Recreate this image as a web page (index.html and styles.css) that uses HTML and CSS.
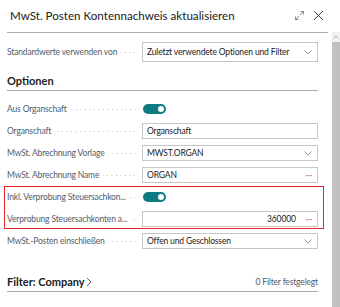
FILE: index.html
```html
<!DOCTYPE html>
<html lang="de">
<head>
<meta charset="utf-8">
<title>MwSt. Posten Kontennachweis aktualisieren</title>
<link rel="stylesheet" href="styles.css">
</head>
<body>
<div class="dialog">
  <header class="titlebar">
    <h1 class="title">MwSt. Posten Kontennachweis aktualisieren</h1>
    <div class="actions">
      <svg class="icon-expand" width="11" height="11" viewBox="0 0 11 11" aria-hidden="true">
        <path d="M6.5 1.5H9.5V4.5M9.5 1.5L6 5M4.5 9.5H1.5V6.5M1.5 9.5L5 6" fill="none" stroke="#7a7a7a" stroke-width="0.9"/>
      </svg>
      <svg class="icon-close" width="11" height="11" viewBox="0 0 11 11" aria-hidden="true">
        <path d="M1 1L10 10M10 1L1 10" fill="none" stroke="#444" stroke-width="1"/>
      </svg>
    </div>
  </header>
  <div class="body">
    <main class="content">
      <div class="form">
        <div class="row row-top">
          <div class="label"><span class="label-text">Standardwerte verwenden von</span><span class="leader"></span></div>
          <div class="field field-top"><span class="value">Zuletzt verwendete Optionen und Filter</span><svg class="chev" width="8" height="5" viewBox="0 0 8 5"><path d="M0.5 0.5L4 4L7.5 0.5" fill="none" stroke="#777" stroke-width="0.8"/></svg></div>
        </div>

        <h2 class="section-title">Optionen</h2>

        <div class="row">
          <div class="label"><span class="label-text">Aus Organschaft</span><span class="leader"></span></div>
          <div class="toggle-cell"><span class="toggle"></span></div>
        </div>
        <div class="row">
          <div class="label"><span class="label-text">Organschaft</span><span class="leader"></span></div>
          <div class="field"><span class="value">Organschaft</span></div>
        </div>
        <div class="row">
          <div class="label"><span class="label-text">MwSt. Abrechnung Vorlage</span><span class="leader"></span></div>
          <div class="field"><span class="value">MWST.ORGAN</span><svg class="chev" width="8" height="5" viewBox="0 0 8 5"><path d="M0.5 0.5L4 4L7.5 0.5" fill="none" stroke="#777" stroke-width="0.8"/></svg></div>
        </div>
        <div class="row">
          <div class="label"><span class="label-text">MwSt. Abrechnung Name</span><span class="leader"></span></div>
          <div class="field"><span class="value">ORGAN</span><span class="ellipsis">···</span></div>
        </div>
        <div class="highlight">
          <div class="row">
            <div class="label"><span class="label-text">Inkl. Verprobung Steuersachkon...</span><span class="leader"></span></div>
            <div class="toggle-cell"><span class="toggle"></span></div>
          </div>
          <div class="row">
            <div class="label"><span class="label-text">Verprobung Steuersachkonten a...</span><span class="leader"></span></div>
            <div class="field"><span class="value num">360000</span><span class="ellipsis">···</span></div>
          </div>
        </div>
        <div class="row">
          <div class="label"><span class="label-text">MwSt.-Posten einschließen</span><span class="leader"></span></div>
          <div class="field"><span class="value">Offen und Geschlossen</span><svg class="chev" width="8" height="5" viewBox="0 0 8 5"><path d="M0.5 0.5L4 4L7.5 0.5" fill="none" stroke="#777" stroke-width="0.8"/></svg></div>
        </div>

        <h2 class="section-title filter-title">
          <span class="filter-name">Filter: Company<svg class="chev-right" width="6" height="10" viewBox="0 0 6 10"><path d="M1 1L5 5L1 9" fill="none" stroke="#555" stroke-width="0.9"/></svg></span>
          <span class="filter-count">0 Filter festgelegt</span>
        </h2>
      </div>
    </main>
    <div class="scrollbar">
      <div class="sb-arrow"><svg width="6" height="4" viewBox="0 0 6 4"><path d="M0.5 3.5L3 1L5.5 3.5" fill="none" stroke="#9a9a9a" stroke-width="0.8"/></svg></div>
      <div class="sb-thumb"></div>
    </div>
  </div>
</div>
</body>
</html>
```

FILE: styles.css
```css
html, body {
  margin: 0;
  padding: 0;
  background: #ffffff;
}

body {
  font-family: Lato, "Open Sans", sans-serif;
  color: #212121;
  width: 340px;
  height: 307px;
  overflow: hidden;
}

.dialog {
  width: 340px;
  height: 307px;
  display: flex;
  flex-direction: column;
}

.titlebar {
  height: 32px;
  flex: 0 0 32px;
  display: flex;
  align-items: center;
  justify-content: space-between;
  padding: 0 16px 2px 10px;
  box-sizing: border-box;
}

.title {
  margin: 0;
  font-size: 11.6px;
  font-weight: 400;
  color: #212121;
  white-space: nowrap;
}

.actions {
  display: flex;
  align-items: center;
  gap: 8px;
}

.actions svg {
  display: block;
}

.body {
  flex: 1;
  display: flex;
  min-height: 0;
}

.content {
  flex: 1;
  margin: 0 4px 0 7px;
  border-top: 1px solid #a3abb7;
  min-width: 0;
}

.form {
  padding: 9px 10px 0 0;
}

.row {
  display: flex;
  align-items: center;
  height: 22px;
}

.row-top {
  height: 20px;
}

.label {
  width: 135px;
  flex: 0 0 135px;
  display: flex;
  align-items: center;
  font-size: 8.5px;
  letter-spacing: -0.15px;
  color: #505c6d;
  min-width: 0;
}

.label-text {
  white-space: nowrap;
  flex: 0 0 auto;
}

.leader {
  flex: 1 1 auto;
  min-width: 6px;
  height: 3px;
  margin: 0 5px 0 4px;
  background-image: radial-gradient(circle, #b9b9b9 0.55px, transparent 0.9px);
  background-size: 4.5px 3px;
  background-repeat: repeat-x;
  background-position: right center;
}

.field {
  flex: 1;
  height: 16px;
  box-sizing: border-box;
  border: 1px solid #c6c6c6;
  display: flex;
  align-items: center;
  padding: 0 4px 0 4px;
  font-size: 8.5px;
  letter-spacing: -0.15px;
  color: #212121;
  min-width: 0;
}

.field-top {
  height: 20px;
}

.value {
  flex: 1;
  white-space: nowrap;
  overflow: hidden;
}

.value.num {
  text-align: right;
  padding-right: 10px;
}

.chev {
  display: block;
  margin-right: 1px;
}

.ellipsis {
  font-size: 8px;
  letter-spacing: 0;
  color: #666;
  margin-right: 1px;
}

.toggle-cell {
  flex: 1;
  display: flex;
  align-items: center;
  padding-left: 1px;
}

.toggle {
  position: relative;
  width: 23px;
  height: 10px;
  border-radius: 5px;
  background: #0f7b83;
}

.toggle::after {
  content: "";
  position: absolute;
  right: 2px;
  top: 2px;
  width: 6px;
  height: 6px;
  border-radius: 50%;
  background: #ffffff;
}

.section-title {
  margin: 11px 0 7px 0;
  height: 16px;
  line-height: 16px;
  font-size: 11px;
  font-weight: 700;
  color: #212121;
  border-bottom: 1px solid #ababab;
  padding-bottom: 1px;
}

.highlight {
  position: relative;
}

.highlight::after {
  content: "";
  position: absolute;
  top: 0;
  bottom: 1px;
  left: -3px;
  right: -6px;
  border: 1.5px solid #e8262b;
  pointer-events: none;
}

.filter-title {
  margin-top: 22px;
  display: flex;
  justify-content: space-between;
  align-items: center;
}

.filter-name {
  display: flex;
  align-items: center;
  gap: 1px;
}

.chev-right {
  display: block;
}

.filter-count {
  font-size: 8.5px;
  letter-spacing: -0.15px;
  font-weight: 400;
  color: #505c6d;
}

.scrollbar {
  width: 8px;
  flex: 0 0 8px;
  display: flex;
  flex-direction: column;
  background: #f1f1f1;
}

.sb-arrow {
  height: 10px;
  flex: 0 0 10px;
  display: flex;
  align-items: center;
  justify-content: center;
}

.sb-arrow svg {
  display: block;
}

.sb-thumb {
  flex: 1;
  background: #c1c1c1;
}
```
